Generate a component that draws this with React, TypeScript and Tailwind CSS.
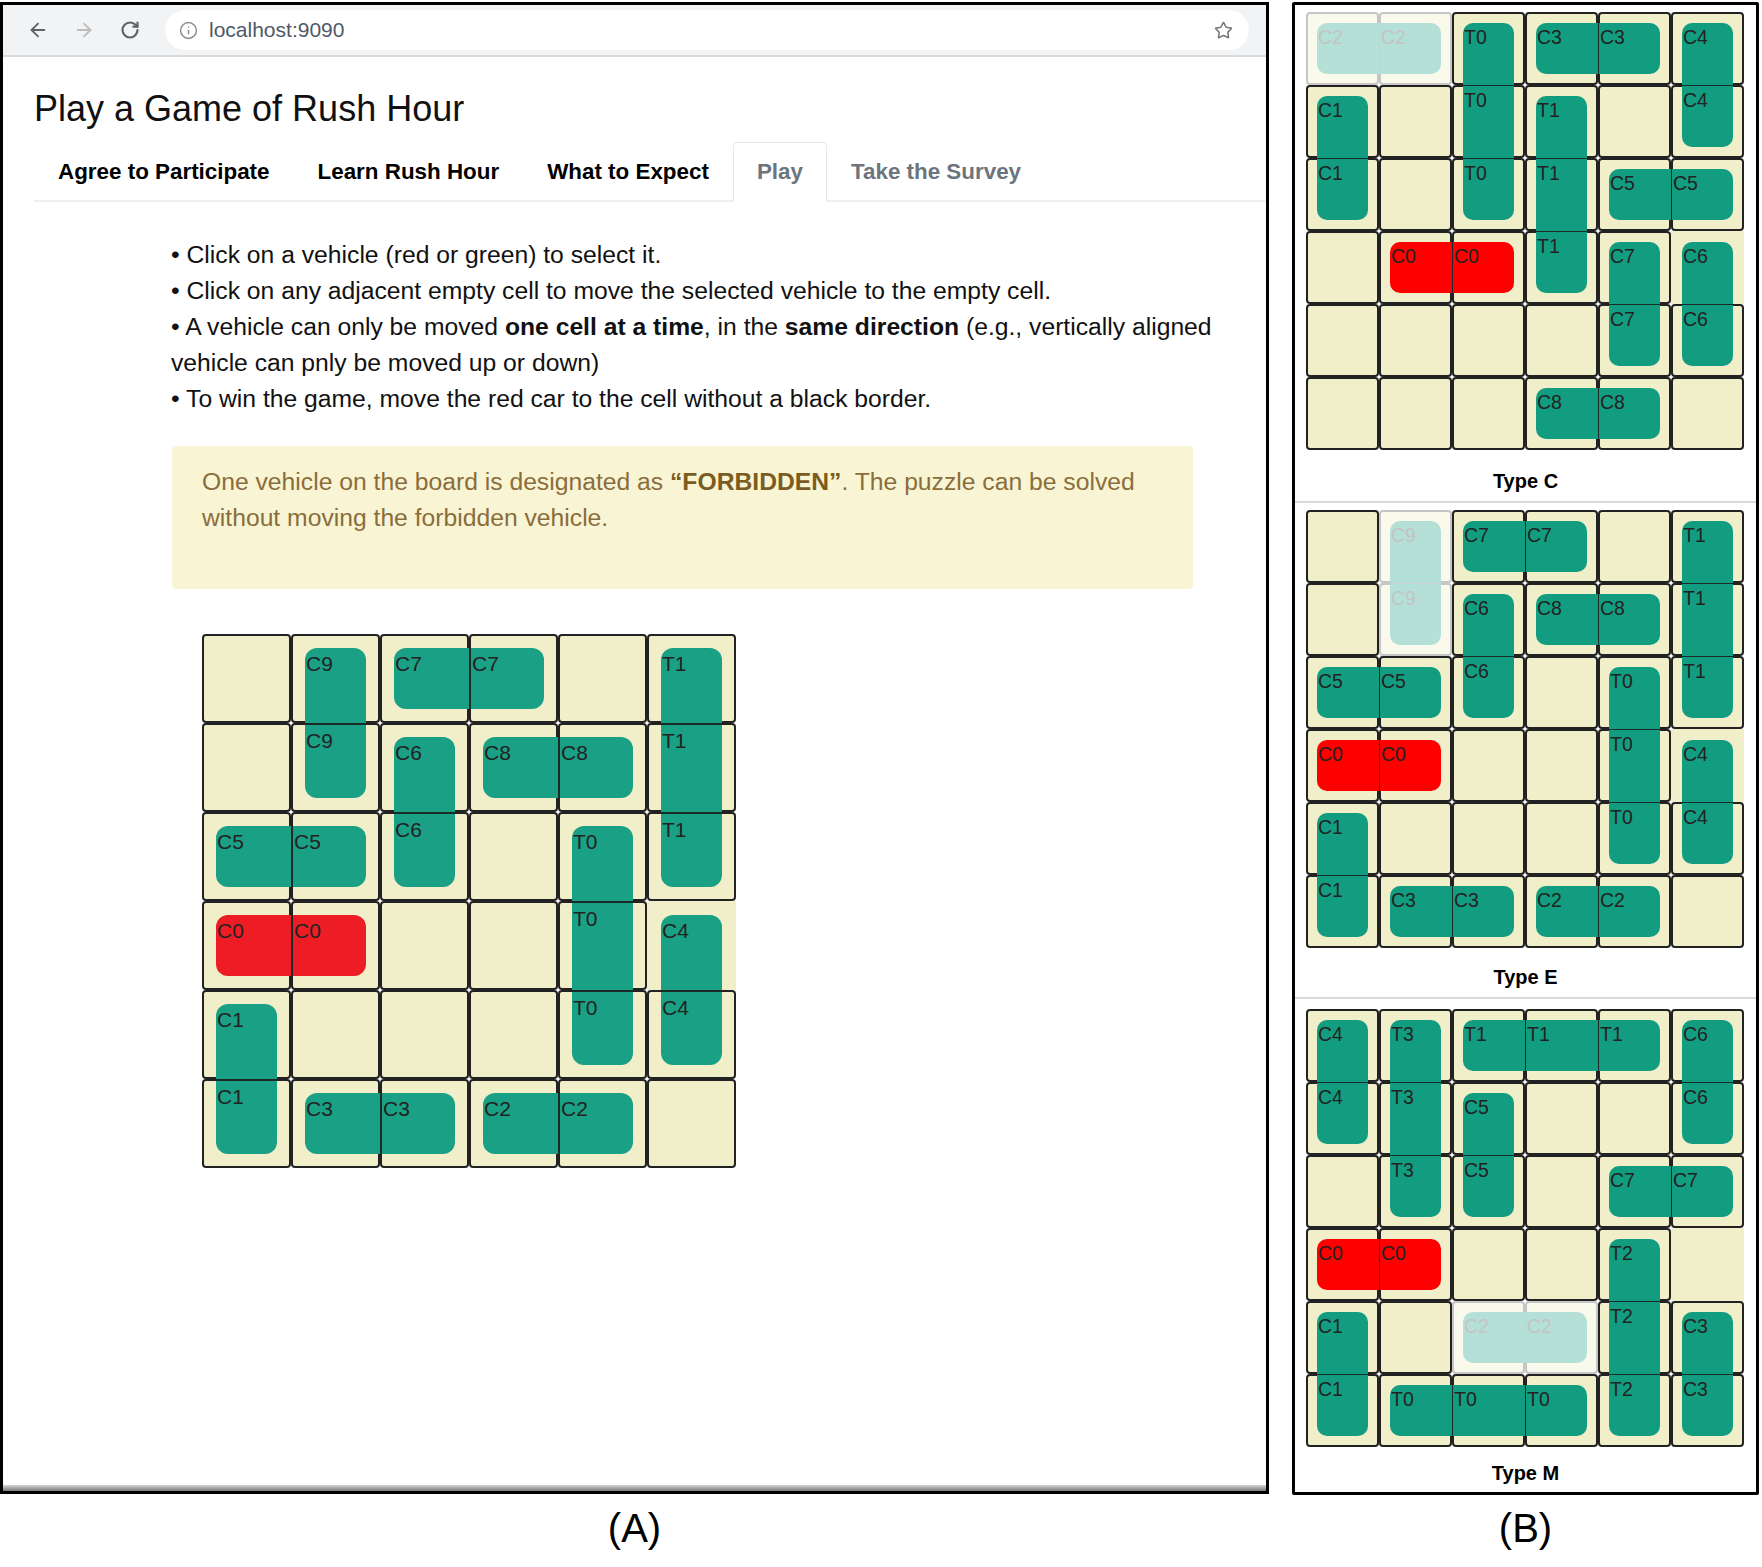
import React from "react";
import { ArrowLeft, ArrowRight, RotateCw, Info, Star } from "lucide-react";

type Veh = { id: string; r: number; c: number; len: number; dir: "h" | "v"; red?: boolean; forbidden?: boolean };

const COLS = ["col-start-1", "col-start-2", "col-start-3", "col-start-4", "col-start-5", "col-start-6"];
const ROWS = ["row-start-1", "row-start-2", "row-start-3", "row-start-4", "row-start-5", "row-start-6"];
const CSPAN = ["", "col-span-1", "col-span-2", "col-span-3"];
const RSPAN = ["", "row-span-1", "row-span-2", "row-span-3"];

const boardAE: Veh[] = [
  { id: "C9", r: 0, c: 1, len: 2, dir: "v" },
  { id: "C7", r: 0, c: 2, len: 2, dir: "h" },
  { id: "T1", r: 0, c: 5, len: 3, dir: "v" },
  { id: "C6", r: 1, c: 2, len: 2, dir: "v" },
  { id: "C8", r: 1, c: 3, len: 2, dir: "h" },
  { id: "C5", r: 2, c: 0, len: 2, dir: "h" },
  { id: "T0", r: 2, c: 4, len: 3, dir: "v" },
  { id: "C0", r: 3, c: 0, len: 2, dir: "h", red: true },
  { id: "C4", r: 3, c: 5, len: 2, dir: "v" },
  { id: "C1", r: 4, c: 0, len: 2, dir: "v" },
  { id: "C3", r: 5, c: 1, len: 2, dir: "h" },
  { id: "C2", r: 5, c: 3, len: 2, dir: "h" },
];

const boardE: Veh[] = boardAE.map((v) => (v.id === "C9" ? { ...v, forbidden: true } : v));

const boardC: Veh[] = [
  { id: "C2", r: 0, c: 0, len: 2, dir: "h", forbidden: true },
  { id: "T0", r: 0, c: 2, len: 3, dir: "v" },
  { id: "C3", r: 0, c: 3, len: 2, dir: "h" },
  { id: "C4", r: 0, c: 5, len: 2, dir: "v" },
  { id: "C1", r: 1, c: 0, len: 2, dir: "v" },
  { id: "T1", r: 1, c: 3, len: 3, dir: "v" },
  { id: "C5", r: 2, c: 4, len: 2, dir: "h" },
  { id: "C0", r: 3, c: 1, len: 2, dir: "h", red: true },
  { id: "C7", r: 3, c: 4, len: 2, dir: "v" },
  { id: "C6", r: 3, c: 5, len: 2, dir: "v" },
  { id: "C8", r: 5, c: 3, len: 2, dir: "h" },
];

const boardM: Veh[] = [
  { id: "C4", r: 0, c: 0, len: 2, dir: "v" },
  { id: "T3", r: 0, c: 1, len: 3, dir: "v" },
  { id: "T1", r: 0, c: 2, len: 3, dir: "h" },
  { id: "C6", r: 0, c: 5, len: 2, dir: "v" },
  { id: "C5", r: 1, c: 2, len: 2, dir: "v" },
  { id: "C7", r: 2, c: 4, len: 2, dir: "h" },
  { id: "C0", r: 3, c: 0, len: 2, dir: "h", red: true },
  { id: "T2", r: 3, c: 4, len: 3, dir: "v" },
  { id: "C1", r: 4, c: 0, len: 2, dir: "v" },
  { id: "C2", r: 4, c: 2, len: 2, dir: "h", forbidden: true },
  { id: "C3", r: 4, c: 5, len: 2, dir: "v" },
  { id: "T0", r: 5, c: 1, len: 3, dir: "h" },
];

type Cfg = {
  size: string;
  h3: string;
  v3: string;
  inset: string;
  radius: string;
  label: string;
  divL: string;
  divT: string;
  green: string;
  red: string;
  cellBorder: string;
};

const cfgA: Cfg = {
  size: "w-[534px] h-[534px]",
  h3: "grid-cols-[1fr_89px_1fr]",
  v3: "grid-rows-[1fr_89px_1fr]",
  inset: "m-[14px]",
  radius: "rounded-[12px]",
  label: "text-[21px] leading-[24px] pt-[4px] pl-[1px]",
  divL: "border-l-2",
  divT: "border-t-2",
  green: "bg-[#1aa084]",
  red: "bg-[#ee1d25]",
  cellBorder: "border-2",
};

const cfgB: Cfg = {
  size: "w-[438px] h-[438px]",
  h3: "grid-cols-[1fr_73px_1fr]",
  v3: "grid-rows-[1fr_73px_1fr]",
  inset: "m-[11px]",
  radius: "rounded-[10px]",
  label: "text-[19.5px] leading-[22px] pt-[3px] pl-[1px]",
  divL: "border-l",
  divT: "border-t",
  green: "bg-[#139d80]",
  red: "bg-[#fe0000]",
  cellBorder: "border-2",
};

function Vehicle({ v, cfg }: { v: Veh; cfg: Cfg }) {
  const horiz = v.dir === "h";
  const place = `${COLS[v.c]} ${ROWS[v.r]} ${horiz ? CSPAN[v.len] + " row-span-1" : RSPAN[v.len] + " col-span-1"}`;
  const template = horiz ? (v.len === 2 ? "grid-cols-2" : cfg.h3) : v.len === 2 ? "grid-rows-2" : cfg.v3;
  const bg = v.forbidden ? "bg-[#b4e0d7]" : v.red ? cfg.red : cfg.green;
  const text = v.forbidden ? "text-[#c4c4c4]" : "text-[#222222]";
  const divColor = v.forbidden ? "border-[#cfcfcf]" : "border-[#1c2a27]";
  return (
    <div className={`${place} ${cfg.inset} ${cfg.radius} ${bg} overflow-hidden grid ${template}`}>
      {Array.from({ length: v.len }).map((_, i) => (
        <div
          key={i}
          className={`${i > 0 ? (horiz ? cfg.divL : cfg.divT) + " " + divColor : ""} ${cfg.label} ${text} whitespace-nowrap`}
        >
          {v.id}
        </div>
      ))}
    </div>
  );
}

function Board({ vehicles, cfg }: { vehicles: Veh[]; cfg: Cfg }) {
  const forb = new Set<string>();
  vehicles.forEach((v) => {
    if (v.forbidden) {
      for (let i = 0; i < v.len; i++) {
        const r = v.dir === "v" ? v.r + i : v.r;
        const c = v.dir === "h" ? v.c + i : v.c;
        forb.add(`${r}-${c}`);
      }
    }
  });
  const cells = [];
  for (let r = 0; r < 6; r++) {
    for (let c = 0; c < 6; c++) {
      const exit = r === 3 && c === 5;
      const f = forb.has(`${r}-${c}`);
      let cls = `${cfg.cellBorder} rounded-[4px] border-[#222222] bg-[#f0efc9]`;
      if (exit) cls = `${cfg.cellBorder} border-transparent bg-[#f0efc9]`;
      else if (f) cls = `${cfg.cellBorder} rounded-[4px] border-[#c6c6c6] bg-[#fafaec]`;
      cells.push(<div key={`${r}-${c}`} className={cls} />);
    }
  }
  return (
    <div className={`grid grid-cols-1 grid-rows-1 ${cfg.size}`}>
      <div className="col-start-1 row-start-1 grid grid-cols-6 grid-rows-6">{cells}</div>
      <div className="col-start-1 row-start-1 grid grid-cols-6 grid-rows-6">
        {vehicles.map((v) => (
          <Vehicle key={v.id} v={v} cfg={cfg} />
        ))}
      </div>
    </div>
  );
}

function Tab({ label, variant }: { label: string; variant: "dark" | "active" | "muted" }) {
  const base = "h-[60px] px-[23px] flex items-center border rounded-t-[5px] -mb-[2px] text-[22.4px] font-bold";
  if (variant === "active")
    return <div className={`${base} border-[#e3e5e8] border-b-white bg-white text-[#6c757d]`}>{label}</div>;
  if (variant === "muted") return <div className={`${base} border-transparent text-[#6c757d]`}>{label}</div>;
  return <div className={`${base} border-transparent text-black`}>{label}</div>;
}

export default function App() {
  return (
    <div className="w-[1762px] h-[1567px] bg-white pt-[2px] flex gap-[23px] font-['Liberation_Sans',Arial,sans-serif] text-black">
      {/* Panel A */}
      <div className="w-[1269px] flex flex-col items-center">
        <div className="w-full h-[1492px] border-[3px] border-black flex flex-col">
          <div className="h-[52px] shrink-0 bg-[#f1f3f4] border-b-2 border-[#d9dadc] flex items-center">
            <ArrowLeft className="ml-[24px] text-[#5f6368]" size={22} strokeWidth={2} />
            <ArrowRight className="ml-[24px] text-[#bdbdbd]" size={22} strokeWidth={2} />
            <RotateCw className="ml-[25px] text-[#5f6368]" size={20} strokeWidth={2.6} />
            <div className="ml-[25px] mr-[17px] flex-1 h-[40px] rounded-full bg-white flex items-center pl-[14px] pr-[16px]">
              <Info className="text-[#8a8a8a]" size={19} strokeWidth={1.8} />
              <span className="ml-[11px] text-[21px] text-[#4f5966]">localhost:9090</span>
              <Star className="ml-auto text-[#777]" size={19} strokeWidth={2} />
            </div>
          </div>

          <div className="mt-[30px] ml-[31px] text-[36px] leading-[43px] text-[#111]">Play a Game of Rush Hour</div>

          <div className="mt-[12px] ml-[31px] mr-[1px] flex border-b-2 border-[#eceef0]">
            <Tab label="Agree to Participate" variant="dark" />
            <Tab label="Learn Rush Hour" variant="dark" />
            <Tab label="What to Expect" variant="dark" />
            <Tab label="Play" variant="active" />
            <Tab label="Take the Survey" variant="muted" />
          </div>

          <div className="mt-[35px] ml-[168px] text-[24.7px] leading-[36px] text-[#111] whitespace-nowrap">
            <div>• Click on a vehicle (red or green) to select it.</div>
            <div>• Click on any adjacent empty cell to move the selected vehicle to the empty cell.</div>
            <div>
              • A vehicle can only be moved <b>one cell at a time</b>, in the <b>same direction</b> (e.g., vertically aligned
              <br />
              vehicle can pnly be moved up or down)
            </div>
            <div>• To win the game, move the red car to the cell without a black border.</div>
          </div>

          <div className="mt-[29px] ml-[169px] w-[1021px] h-[143px] shrink-0 rounded-[4px] bg-[#f9f5d4] pt-[18px] pl-[30px] text-[24.7px] leading-[36px] text-[#8a6d3b] whitespace-nowrap">
            One vehicle on the board is designated as <b className="text-[#7a5c22]">“FORBIDDEN”</b>. The puzzle can be solved
            <br />
            without moving the forbidden vehicle.
          </div>

          <div className="mt-[45px] ml-[199px]">
            <Board vehicles={boardAE} cfg={cfgA} />
          </div>

          <div className="flex-1" />
          <div className="h-[6px] bg-gradient-to-b from-[#d6d6d6] to-[#7a7a7a]" />
        </div>
        <div className="mt-[11px] text-[40px] leading-[46px]">(A)</div>
      </div>

      {/* Panel B */}
      <div className="w-[467px] flex flex-col items-center">
        <div className="w-full border-[3px] border-black px-[11px] pt-[7px] pb-[7px] rounded-[2px]">
          <Board vehicles={boardC} cfg={cfgB} />
          <div className="mt-[19px] text-[20px] leading-[24px] font-bold text-center">Type C</div>
          <div className="mt-[8px] -mx-[11px] h-[2px] bg-[#dadada]" />
          <div className="pt-[7px]">
            <Board vehicles={boardE} cfg={cfgB} />
          </div>
          <div className="mt-[17px] text-[20px] leading-[24px] font-bold text-center">Type E</div>
          <div className="mt-[8px] -mx-[11px] h-[2px] bg-[#dadada]" />
          <div className="pt-[10px]">
            <Board vehicles={boardM} cfg={cfgB} />
          </div>
          <div className="mt-[14px] text-[20px] leading-[24px] font-bold text-center">Type M</div>
        </div>
        <div className="mt-[10px] text-[40px] leading-[46px]">(B)</div>
      </div>
    </div>
  );
}
